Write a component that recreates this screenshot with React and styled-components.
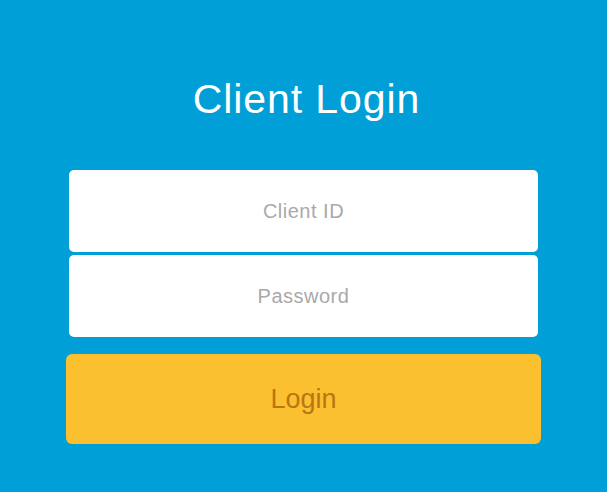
import styled, { createGlobalStyle } from "styled-components";

const GlobalStyle = createGlobalStyle`
  html, body {
    margin: 0;
    padding: 0;
    background: #019fd7;
  }
  body {
    font-family: "Liberation Sans", Arial, sans-serif;
  }
`;

const Page = styled.div`
  width: 607px;
  height: 492px;
  display: flex;
  flex-direction: column;
  align-items: center;
  background: #019fd7;
`;

const Title = styled.h1`
  margin: 74px 0 0 6px;
  height: 50px;
  font-size: 41px;
  line-height: 50px;
  font-weight: normal;
  letter-spacing: 0.9px;
  color: #ffffff;
`;

const Form = styled.form`
  margin-top: 46px;
  width: 475px;
  display: flex;
  flex-direction: column;
  align-items: center;
`;

const Input = styled.input`
  box-sizing: border-box;
  width: 469px;
  height: 82px;
  margin-bottom: ${(p) => p.$gap}px;
  border: none;
  border-radius: 5px;
  background: #ffffff;
  text-align: center;
  font-family: "Liberation Sans", Arial, sans-serif;
  font-size: 20px;
  letter-spacing: 0.5px;
  outline: none;

  &::placeholder {
    color: #a9a9a9;
  }
`;

const Button = styled.button`
  width: 475px;
  height: 90px;
  border: none;
  border-radius: 6px;
  background: #fbc02f;
  color: #b67712;
  font-family: "Liberation Sans", Arial, sans-serif;
  font-size: 27px;
  cursor: pointer;
`;

export default function App() {
  return (
    <>
      <GlobalStyle />
      <Page>
        <Title>Client Login</Title>
        <Form onSubmit={(e) => e.preventDefault()}>
          <Input placeholder="Client ID" $gap={3} />
          <Input type="password" placeholder="Password" $gap={17} />
          <Button type="submit">Login</Button>
        </Form>
      </Page>
    </>
  );
}
